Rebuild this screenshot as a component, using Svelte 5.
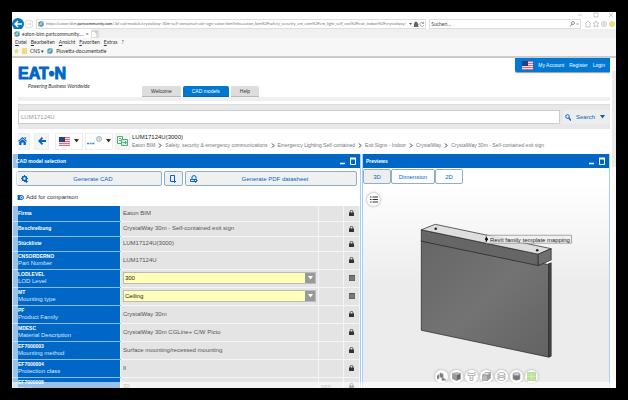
<script>
  let part = "LUM17124U";
  const host = "partcommunity.com";
  const path = "/3d-cad-models/crystalway-30m-self-contained-exit-sign-eaton-bim?info=eaton_bim%2Fsafety_security_em_com%2Fem_light_self_con%2Fexit_indoor%2Fcrystalway/";
  const menus = ["Datei", "Bearbeiten", "Ansicht", "Favoriten", "Extras", "?"];
  const crumbs = [
    "Eaton BIM",
    "Safety, security & emergency communications",
    "Emergency Lighting Self-contained",
    "Exit Signs - Indoor",
    "CrystalWay",
    "CrystalWay 30m - Self-contained exit sign"
  ];
  const rows = [
    { key: "Firma", value: "Eaton BIM" },
    { key: "Beschreibung", value: "CrystalWay 30m - Self-contained exit sign" },
    { key: "Stückliste", value: "LUM17124U(3000)" },
    { key: "CNSORDERNO", name: "Part Number", value: "LUM17124U" },
    { key: "LODLEVEL", name: "LOD Level", value: "300", select: true },
    { key: "MT", name: "Mounting type", value: "Ceiling", select: true },
    { key: "PF", name: "Product Family", value: "CrystalWay 30m" },
    { key: "MDESC", name: "Material Description", value: "CrystalWay 30m CGLine+ C/W Picto" },
    { key: "EF7000003", name: "Mounting method", value: "Surface mounting/recessed mounting" },
    { key: "EF7000004", name: "Protection class", value: "II" },
    { key: "EF7000008", name: "Width", value: "30", unit: "mm" }
  ];
  const tools = ["explode", "solid", "section", "shaded", "wire", "cylinder", "measure"];
</script>

<style>
  :global(body) {
    background: #000;
  }

  .frame {
    box-sizing: border-box;
    height: 100vh;
    padding: 12px;
    font-family: "Liberation Sans", Arial, sans-serif;
    font-size: 6px;
    line-height: 8px;
    color: #333;
  }

  .window {
    position: relative;
    height: 100%;
    display: flex;
    flex-direction: column;
    background: #fff;
    overflow: hidden;
  }

  button,
  input,
  select {
    font: inherit;
    color: inherit;
    margin: 0;
    padding: 0;
    border: 0;
    background: none;
    box-sizing: border-box;
    min-width: 0;
  }

  button {
    display: flex;
    align-items: center;
    justify-content: center;
  }

  a {
    color: inherit;
    text-decoration: none;
  }

  svg {
    display: block;
    flex: none;
  }

  /* browser chrome */
  .chrome {
    flex: none;
    background: #f7f7f7;
    border-bottom: 2px solid #ccc;
    font-family: Lato, sans-serif;
    font-size: 5px;
  }

  .controls {
    display: flex;
    justify-content: flex-end;
    height: 6px;
    padding-right: 3px;
    background: #fff;
  }

  .address {
    display: flex;
    align-items: center;
    gap: 3px;
    height: 11px;
    padding-right: 1px;
    background: #fff;
  }

  .urlbox,
  .find {
    display: flex;
    align-items: center;
    gap: 2px;
    box-sizing: border-box;
    height: 10px;
    padding: 0 1px;
    border: 1px solid #ddd;
    color: #777;
  }

  .urlbox {
    flex: 392;
    min-width: 0;
  }

  .url {
    flex: 1;
    min-width: 0;
    overflow: hidden;
    white-space: nowrap;
    font-size: 4px;
  }

  .url b {
    font-weight: 400;
    color: #111;
  }

  .find {
    flex: 150;
  }

  .find input {
    flex: 1;
  }

  .find input::placeholder {
    color: #444;
    opacity: 1;
  }

  .browser-tabs,
  .menu,
  .favorites {
    display: flex;
    align-items: center;
  }

  .browser-tabs {
    height: 9px;
    background: #f0f0f0;
  }

  .browser-tabs a {
    display: flex;
    align-items: center;
    gap: 2px;
    height: 9px;
    padding: 0 2px;
    background: #fff;
  }

  .newtab {
    width: 8px;
    height: 8px;
    background: #ddd;
  }

  .menu {
    height: 8px;
    gap: 4px;
    padding-left: 3px;
  }

  .menu a::first-letter {
    text-decoration: underline;
  }

  .favorites {
    height: 10px;
    gap: 3px;
    padding-left: 2px;
  }

  /* page */
  .body {
    flex: 1;
    min-height: 0;
    display: flex;
  }

  .page {
    flex: 1;
    min-width: 0;
    display: flex;
    flex-direction: column;
    overflow: hidden;
  }

  .scrollbar {
    flex: none;
    width: 4px;
    margin-left: 2px;
    padding-top: 13px;
    background: #fafafa;
  }

  .thumb {
    height: 96px;
    background: #ebebeb;
  }

  header {
    flex: none;
    display: flex;
    justify-content: space-between;
    height: 39px;
    padding-left: 6px;
  }

  .brand {
    width: 124px;
    padding-top: 7px;
  }

  .logo {
    display: block;
    font-size: 16px;
    line-height: 17px;
    font-weight: 700;
    color: #0067c6;
    -webkit-text-stroke: 1px #0067c6;
  }

  .claim {
    display: block;
    padding-left: 10px;
    font-family: Lato, sans-serif;
    font-size: 5px;
    font-style: italic;
  }

  .tabs {
    flex: 1;
    display: flex;
    align-items: flex-end;
    gap: 2px;
    font-size: 5px;
  }

  .tabs a {
    height: 8px;
    padding: 1px 9px;
    border-radius: 2px 2px 0 0;
    background: #ddd;
    border-bottom: 1px solid #bbb;
  }

  .tabs .active {
    background: #0078d0;
    color: #fff;
    border-color: #0067b0;
  }

  .account {
    display: flex;
    align-items: center;
    gap: 5px;
    height: 14px;
    padding: 0 5px 0 7px;
    border-radius: 0 0 0 2px;
    background: #0078d4;
    color: #fff;
    font-size: 5px;
    box-shadow: 0 1px 1px #999;
  }

  .stripe {
    flex: none;
    height: 4px;
    margin: 0 0 3px 6px;
    background: #f0f0f0;
  }

  .search {
    flex: none;
    display: flex;
    align-items: center;
    gap: 3px;
    height: 24px;
    margin-left: 6px;
    background: #e7e8e9;
    border-top: 1px solid #ddd;
  }

  .search input {
    flex: 1;
    height: 14px;
    padding: 0 2px;
    background: #fff;
    border: 1px solid #ccc;
    color: #999;
  }

  .search button {
    height: 14px;
    gap: 5px;
    padding: 0 5px 0 2px;
    color: #0067c6;
    background: #ededed;
  }

  .trail {
    flex: none;
    display: flex;
    align-items: center;
    gap: 2px;
    height: 24px;
    padding: 0 0 1px 3px;
  }

  .trail button {
    flex: none;
    height: 17px;
    width: 15px;
    background: #f5f5f5;
    border: 1px solid #eee;
  }

  .trail .pick {
    width: 28px;
    gap: 4px;
    background: #fff;
  }

  .trail .home {
    margin-right: 2px;
  }

  .trail .back {
    margin-right: 4px;
  }

  .title {
    line-height: 8px;
    color: #222;
  }

  .crumbs {
    display: flex;
    align-items: center;
    gap: 3px;
    color: #777;
    font-size: 5px;
    white-space: nowrap;
  }

  .panels {
    flex: 1;
    min-height: 0;
    display: grid;
    grid-template-columns: 349fr 248fr;
    gap: 1px;
  }

  .panel {
    min-width: 0;
    min-height: 0;
    display: flex;
    flex-direction: column;
    border: 1px solid #a6cff5;
    border-width: 0 1px;
    overflow: hidden;
  }

  .panel h2 {
    flex: none;
    display: flex;
    align-items: center;
    justify-content: space-between;
    height: 14px;
    margin: 0;
    padding: 0 3px;
    background: #0067c6;
    color: #fff;
    font-size: 5px;
    font-weight: 700;
  }

  .actions {
    flex: none;
    display: flex;
    gap: 2px;
    padding: 3px 3px 0;
  }

  .actions button,
  .views button {
    height: 15px;
    border: 1px solid #8fb0c4;
    border-radius: 2px;
    background: #f0f0f0;
    color: #0067c6;
  }

  .actions .wide {
    flex: 145;
    padding: 0 4px;
  }

  .actions .wider {
    flex: 173;
    padding: 0 4px;
  }

  .actions .copy {
    flex: 18;
  }

  .wide span,
  .wider span {
    flex: 1;
  }

  .compare {
    flex: none;
    display: flex;
    align-items: center;
    gap: 2px;
    height: 20px;
    padding: 2px 4px 0;
    box-sizing: border-box;
  }

  table {
    width: 100%;
    table-layout: fixed;
    border-collapse: collapse;
    line-height: 7px;
  }

  tr {
    height: 15px;
  }

  .double {
    height: 18px;
  }

  th,
  td {
    padding: 0 2px;
    border-bottom: 1px solid #f5f5f5;
    border-right: 1px solid #f5f5f5;
    background: #e4e4e4;
    text-align: left;
    color: #555;
  }

  th {
    padding-left: 5px;
    background: #0067c6;
    border-bottom-color: #8bbcec;
    color: #fff;
    font-weight: 400;
    vertical-align: middle;
  }

  th b,
  th span {
    display: block;
  }

  th b {
    font-size: 5px;
  }

  th span {
    color: #d8e9fa;
  }

  .key {
    width: 31%;
  }

  .unit {
    width: 25px;
  }

  .state {
    width: 16px;
  }

  td svg {
    margin: 0 auto;
  }

  .drop {
    display: grid;
    grid-template-columns: 1fr 10px;
    height: 12px;
    border: 1px solid #bbb;
    box-sizing: border-box;
    background: #ffffb8;
    color: #222;
  }

  .drop select {
    grid-area: 1 / 1 / 2 / 3;
    width: 100%;
    height: 10px;
    padding-left: 1px;
    appearance: none;
  }

  .drop span {
    grid-area: 1 / 2;
    display: flex;
    align-items: center;
    justify-content: center;
    background: #999;
    pointer-events: none;
  }

  .views {
    flex: none;
    display: flex;
    padding: 1px 0 0;
  }

  .views button {
    width: 28px;
    background: #fff;
  }

  .views .dimension {
    width: 44px;
  }

  .views .on {
    background: #eee;
  }

  .viewer {
    position: relative;
    flex: 1;
    min-height: 0;
    background: linear-gradient(#fff, #ececec 50%);
  }

  .model {
    width: 100%;
    height: 100%;
  }

  .round {
    width: 13px;
    height: 13px;
    border-radius: 50%;
    background: #fff;
    box-shadow: 0 0 2px 1px #ccc;
  }

  .list {
    position: absolute;
    left: 4px;
    top: 9px;
  }

  .toolbar {
    position: absolute;
    left: 0;
    right: 0;
    bottom: 5px;
    display: flex;
    justify-content: center;
    gap: 2px;
  }

  /* pale edges over the page */
  .fade-left,
  .fade-bottom {
    position: absolute;
    left: 0;
    bottom: 0;
    background: rgba(255, 255, 255, 0.6);
    pointer-events: none;
  }

  .fade-left {
    top: 46px;
    width: 6px;
  }

  .fade-bottom {
    right: 0;
    height: 6px;
  }
</style>

{#snippet down(color)}
  <svg width="5" height="4" viewBox="0 0 5 4"><path d="M0 0h5L2.500 3.500z" fill={color} /></svg>
{/snippet}

{#snippet flag()}
  <svg width="11" height="9" viewBox="0 0 11 9">
    <path d="M0 0h11v9H0z" fill="#f3dadd" />
    <path d="M0 .5h11M0 2.500h11M0 4.500h11M0 6.500h11M0 8.500h11" stroke="#d0737d" />
    <path d="M0 0h6v5H0z" fill="#26417f" />
  </svg>
{/snippet}

{#snippet ie()}
  <svg width="6" height="6" viewBox="0 0 6 6">
    <circle cx="3" cy="3" r="2" fill="none" stroke="#2997db" stroke-width="1.500" />
    <path d="M1 3h4" stroke="#2997db" />
    <path d="M.5 5.500Q0 3 5.500.5" fill="none" stroke="#eebc35" />
  </svg>
{/snippet}

{#snippet gear()}
  <svg width="8" height="8" viewBox="0 0 8 8">
    <circle cx="3.500" cy="3.500" r="2" fill="none" stroke="#0067c6" stroke-width="1.500" />
    <path d="M3.500 0v1M3.500 6v1M0 3.500h1M6 3.500h1M1 1l.7.7M6 1l-.7.7M1 6l.7-.7" stroke="#0067c6" />
    <path d="M5.500 3.500v4M4 6l1.500 1.500L7.200 6" fill="none" stroke="#0067c6" />
  </svg>
{/snippet}

{#snippet boxes()}
  <svg width="18" height="8" viewBox="0 0 18 8">
    <path d="M1 6.500h5" stroke="#fff" stroke-width="1.500" />
    <path d="M11.500 1.500h5v6h-5z" fill="none" stroke="#fff" />
    <path d="M11 1.500h6" stroke="#fff" stroke-width="2" />
  </svg>
{/snippet}

<div class="frame">
  <div class="window">
    <div class="chrome">
      <div class="controls">
        <svg width="36" height="6" viewBox="0 0 36 6" fill="none" stroke="#aaa" stroke-width=".6">
          <path d="M1 3h4M17 1h4v4h-4zM32 1l4 4M36 1l-4 4" />
        </svg>
      </div>
      <div class="address">
        <svg width="21" height="12" viewBox="0 0 21 12">
          <circle cx="6" cy="6" r="6" fill="#0879bd" />
          <path d="M10 6H3M6 3L3 6l3 3" fill="none" stroke="#fff" stroke-width="1.500" />
          <circle cx="17" cy="6" r="4" fill="#fff" stroke="#ddd" />
          <path d="M15 6h4M17.500 4.500L19 6l-1.500 1.500" fill="none" stroke="#ccc" stroke-width=".7" />
        </svg>
        <div class="urlbox">
          {@render ie()}
          <div class="url">https://eaton-bim.<b>{host}</b>{path}</div>
          <svg width="3" height="2" viewBox="0 0 3 2"><path d="M0 0h3L1.500 2z" fill="#555" /></svg>
          <svg width="10" height="6" viewBox="0 0 10 6">
            <path d="M0 2.500h4V6H0zM1 3V1h2v2" fill="#666" stroke="#666" stroke-width=".6" />
            <path d="M9.500 2A2 2 0 1 0 10 4M10 .5V2.500H8" fill="none" stroke="#888" stroke-width=".7" />
          </svg>
        </div>
        <div class="find">
          <input placeholder="Suchen..." aria-label="Suchen" />
          <svg width="9" height="6" viewBox="0 0 9 6" fill="none" stroke="#666" stroke-width=".7">
            <circle cx="3" cy="2" r="1.500" /><path d="M2 3L0 5.500M6.500 3h2" />
          </svg>
        </div>
        <svg width="31" height="8" viewBox="0 0 31 8" fill="none" stroke="#bbb" stroke-width=".8">
          <path d="M1 4l3-3 3 3M2 4v3h4V4M12 1l1 2h2l-1.500 1.500.5 2.500-2-1.500L10 7l.5-2.500L9 3h2z" />
          <circle cx="20" cy="4" r="2.500" /><circle cx="20" cy="4" r="1" />
          <circle cx="28" cy="4" r="2.500" fill="#f5dc78" stroke="#e6cf77" />
        </svg>
      </div>
      <div class="browser-tabs">
        <a href="#tab">{@render ie()}eaton-bim.partcommunity.... <span>×</span></a>
        <button class="newtab" aria-label="Neue Registerkarte">
          <svg width="5" height="6" viewBox="0 0 5 6"><path d="M0 1h3l1 1v4H0z" fill="#fff" /><circle cx="4" cy="1" r="1" fill="#efbc50" /></svg>
        </button>
      </div>
      <div class="menu">
        {#each menus as item}
          <a href="#menu">{item}</a>
        {/each}
      </div>
      <div class="favorites">
        <svg width="5" height="6" viewBox="0 0 5 6"><path d="M2.500 0l.8 2H5L3.800 3.500 4.500 6l-2-1.500-2 1.500.7-2.500L0 2h1.700z" fill="#e9d87c" /></svg>
        <svg width="5" height="6" viewBox="0 0 5 6"><path d="M0 0h5v6H0z" fill="#f5d97c" /></svg>
        <a href="#cns">CNS ▾</a>
        {@render ie()}
        <a href="#docs">Pluvetta-documentatie</a>
      </div>
    </div>

    <div class="body">
      <div class="page">
        <header>
          <div class="brand">
            <span class="logo">EAT•N</span>
            <span class="claim">Powering Business Worldwide</span>
          </div>
          <nav class="tabs">
            <a href="#welcome">Welcome</a>
            <a href="#models" class="active">CAD models</a>
            <a href="#help">Help</a>
          </nav>
          <div class="account">
            {@render flag()}
            <a href="#account">My Account</a>
            <a href="#register">Register</a>
            <a href="#login">Login</a>
          </div>
        </header>
        <div class="stripe"></div>

        <div class="search">
          <input bind:value={part} aria-label="Search" />
          <button>
            <svg width="6" height="7" viewBox="0 0 6 7" fill="none" stroke="#0067c6"><circle cx="2.500" cy="2.500" r="1.800" /><path d="M3.800 4L6 6.500" stroke-width="1.500" /></svg>
            Search
            {@render down("#0067c6")}
          </button>
        </div>

        <div class="trail">
          <button class="home" aria-label="Home">
            <svg width="9" height="8" viewBox="0 0 9 8" fill="#0067c6"><path d="M4.500 0L9 4l-.8.8L4.500 1.500.8 4.800 0 4zM4.500 2.300L7.800 5v3H5.500V5.500h-2V8H1.200V5zM6.500.3H8v2L6.500 1z" /></svg>
          </button>
          <button class="back" aria-label="Back">
            <svg width="8" height="8" viewBox="0 0 8 8" fill="none" stroke="#0067c6" stroke-width="1.800"><path d="M8 4H1.500M4.500.7L1.200 4l3.300 3.300" /></svg>
          </button>
          <button class="pick" aria-label="Language">{@render flag()}{@render down("#333")}</button>
          <button class="pick" aria-label="Units">
            <svg width="15" height="12" viewBox="0 0 15 12">
              <path d="M0 8.500h8" stroke="#3c8eda" stroke-width="1.500" stroke-dasharray="2 .6" />
              <circle cx="12" cy="4" r="2.500" fill="#e5e9ef" stroke="#a9b5c5" />
              <path d="M12 2.500V4l1 1" fill="none" stroke="#8b99ac" stroke-width=".6" />
            </svg>
            {@render down("#333")}
          </button>
          <button aria-label="Compare tables">
            <svg width="11" height="10" viewBox="0 0 11 10" fill="none" stroke="#4faf75"><path d="M.5.5h5v7h-5zM2 2.500h2M2 4.500h2" /><path d="M4.500 3.500h6v6h-6z" fill="#d9efe1" /><path d="M5.500 6.500h4M8 5l1.500 1.500L8 8" /></svg>
          </button>
          <div>
            <div class="title">LUM17124U(3000)</div>
            <nav class="crumbs">
              {#each crumbs as crumb, i}
                {#if i > 0}
                  <svg width="4" height="5" viewBox="0 0 4 5" fill="none" stroke="#333"><path d="M1 .5l2 2-2 2" /></svg>
                {/if}
                <a href="#catalog">{crumb}</a>
              {/each}
            </nav>
          </div>
        </div>

        <main class="panels">
          <section class="panel">
            <h2>CAD model selection {@render boxes()}</h2>
            <div class="actions">
              <button class="wide">{@render gear()}<span>Generate CAD</span></button>
              <button class="copy" aria-label="Send CAD">
                <svg width="6" height="8" viewBox="0 0 6 8" fill="none" stroke="#0067c6"><path d="M3 6.500H.5v-6h4V4M4.500 4v3.500M3 6l1.500 1.500L6 6" /></svg>
              </button>
              <button class="wider">
                <svg width="8" height="8" viewBox="0 0 8 8" fill="none" stroke="#0067c6"><path d="M2 4V1.500L4 .5l2 1V4M.5 4.500h6v2h-6zM4 5l1.500 2.500L7.500 5" /></svg>
                <span>Generate PDF datasheet</span>
              </button>
            </div>
            <div class="compare">
              <svg width="7" height="7" viewBox="0 0 7 7"><path d="M0 1h4v5H0z" fill="#0067c6" /><circle cx="4.500" cy="3.500" r="2" fill="#fff" stroke="#0067c6" /><path d="M4.500 2.500v2M3.500 3.500h2" stroke="#0067c6" stroke-width=".6" /></svg>
              <a href="#compare">Add for comparison</a>
            </div>
            <table>
              <colgroup><col class="key" /><col /><col class="unit" /><col class="state" /></colgroup>
              <tbody>
                {#each rows as row}
                  <tr class:double={row.name}>
                    <th scope="row"><b>{row.key}</b>{#if row.name}<span>{row.name}</span>{/if}</th>
                    <td>
                      {#if row.select}
                        <div class="drop">
                          <select aria-label={row.name}><option>{row.value}</option></select>
                          <span>{@render down("#fff")}</span>
                        </div>
                      {:else}
                        {row.value}
                      {/if}
                    </td>
                    <td>{row.unit || ""}</td>
                    <td>
                      {#if row.select}
                        <svg width="6" height="6" viewBox="0 0 6 6"><path d="M0 0h6v6H0z" fill="#555" /><path d="M0 2h6M0 4h6M2 1v5M4 1v5" stroke="#bbb" stroke-width=".4" /></svg>
                      {:else}
                        <svg width="5" height="6" viewBox="0 0 5 6"><path d="M0 2.500h5V6H0z" fill="#333" /><path d="M1.200 3V1.500a1.300 1.200 0 0 1 2.600 0V3" fill="none" stroke="#333" stroke-width=".8" /></svg>
                      {/if}
                    </td>
                  </tr>
                {/each}
              </tbody>
            </table>
          </section>

          <section class="panel">
            <h2>Previews {@render boxes()}</h2>
            <div class="views">
              <button class="on">3D</button>
              <button class="dimension">Dimension</button>
              <button>2D</button>
            </div>
            <div class="viewer">
              <svg class="model" viewBox="0 0 246 205">
                <defs>
                  <linearGradient id="plate" x2="1" y2="1"><stop stop-color="#666" /><stop offset=".5" stop-color="#737373" /><stop offset="1" stop-color="#626262" /></linearGradient>
                </defs>
                <g stroke="#222" stroke-width=".7" stroke-linejoin="round">
                  <path d="M58 57L186 81V174L58 147z" fill="url(#plate)" />
                  <path d="M186 80l2.500-1v94l-2.500 1z" fill="#484848" />
                  <path d="M58 46l117.500 24.500V82L58 57.500z" fill="#666" />
                  <path d="M58 46l14-5.500L188.500 65l-13 5.500z" fill="#dedede" />
                  <path d="M175.500 70.500l13-5.500v11.500l-13 5.500z" fill="#707070" />
                </g>
                <path d="M183 79.500l5.500-2.500v2z" fill="#fff" />
                <circle cx="72.500" cy="45" r="1.300" fill="#222" /><circle cx="174.500" cy="66.500" r="1.300" fill="#222" />
                <path d="M123 51.500h86v8h-86z" fill="#eee" fill-opacity=".85" stroke="#777" stroke-width=".6" />
                <path d="M123.500 53v5" stroke="#111" /><circle cx="123.500" cy="55.500" r="1.500" fill="#111" />
                <text x="127" y="58" font-family="Liberation Sans, sans-serif" font-size="6" fill="#222">Revit family template mapping</text>
              </svg>
              <button class="round list" aria-label="List">
                <svg width="8" height="7" viewBox="0 0 8 7" stroke="#333"><path d="M0 1h1.500M2.500 1H8M0 3.500h1.500M2.500 3.500H8M0 6h1.500M2.500 6H8" /></svg>
              </button>
              <div class="toolbar">
                {#each tools as tool}
                  <button class="round" aria-label={tool}>
                    <svg width="9" height="9" viewBox="0 0 9 9" fill="none" stroke="#999" stroke-width=".7">
                      {#if tool === "explode"}
                        <path d="M0 4l2-1.500v4L0 7zM3 1l3 1v4L3 5zM5 5l4 3-4 .5z" fill="#777" />
                      {:else if tool === "solid"}
                        <path d="M.5 1.500l4 1.500v5.500l-4-1.500z" fill="#999" /><path d="M4.500 3l4-1.500V7l-4 1.500z" fill="#666" /><path d="M.5 1.500l4-1 4 1-4 1.500z" fill="#bbb" />
                      {:else if tool === "section"}
                        <path d="M1 .5l2 1h3l2-1v3H1zM3 4v4.500h3V4M3 6h3" />
                      {:else if tool === "shaded"}
                        <path d="M.5 3h5v5.500h-5z" fill="#bbb" /><path d="M5.500 3l3-2.500V6l-3 2.500z" fill="#999" /><path d="M.5 3l3-2.500h5L5.500 3z" fill="#ddd" />
                      {:else if tool === "wire"}
                        <ellipse cx="4.500" cy="2" rx="3.500" ry="1.500" /><ellipse cx="4.500" cy="7" rx="3.500" ry="1.500" /><path d="M1 2v5M8 2v5M1 4.500q3.500 1.500 7 0" />
                      {:else if tool === "cylinder"}
                        <path d="M1 2v5q3.500 2.500 7 0V2z" fill="#777" /><ellipse cx="4.500" cy="2" rx="3.500" ry="1.500" fill="#ccc" />
                      {:else}
                        <path d="M.5.5h8v8h-8z" fill="#bfe29c" stroke="#a9d382" /><path d="M.5 4.500h8M4.500.5v8" stroke="#dff0cd" />
                      {/if}
                    </svg>
                  </button>
                {/each}
              </div>
            </div>
          </section>
        </main>
      </div>
      <div class="scrollbar"><div class="thumb"></div></div>
    </div>
    <div class="fade-left"></div>
    <div class="fade-bottom"></div>
  </div>
</div>
